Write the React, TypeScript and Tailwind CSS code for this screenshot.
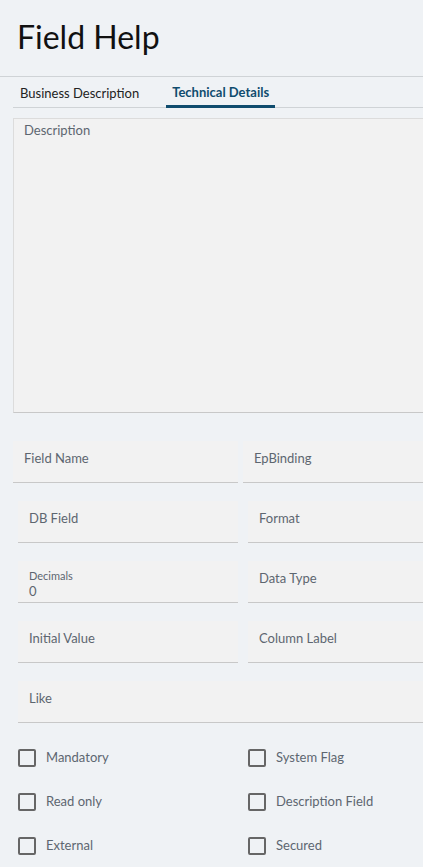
import React from 'react';

// Field Help panel - technical details tab
const font = { fontFamily: 'Lato, "Noto Sans", Arial, sans-serif' };

function Field({ label, value, small }: { label: string; value?: string; small?: boolean }) {
  return (
    <div className="h-[42px] bg-[#f2f2f2] border-b border-[#c8c8c8] pl-[11px] min-w-0">
      {small ? (
        <div className="pt-[8px]">
          <div className="text-[11px] leading-[14px] text-[#5d6670]">{label}</div>
          <div className="text-[13px] leading-[17px] text-[#5d6670]">{value}</div>
        </div>
      ) : (
        <div className="pt-[8px] text-[13px] leading-[18px] text-[#5d6670]">{label}</div>
      )}
    </div>
  );
}

function Check({ label }: { label: string }) {
  return (
    <label className="flex items-center h-[18px]">
      <span className="w-[18px] h-[18px] border-2 border-[#666] rounded-[2px] shrink-0" />
      <span className="ml-[10px] text-[13px] text-[#5d6670]">{label}</span>
    </label>
  );
}

export default function App() {
  return (
    <div className="min-h-screen bg-[#eff2f5] overflow-hidden" style={font}>
      <div className="h-[77px] border-b border-[#cfd3d6] pl-[17px] pt-[17px]">
        <h1 className="text-[32px] leading-[40px] text-[#111]">Field Help</h1>
      </div>

      <div className="ml-[13px] flex items-start h-[31px] border-b border-[#cfd3d6]">
        <button className="px-[7px] text-[13px] text-[#222] leading-[32px]">Business Description</button>
        <button className="ml-[20px] h-[31px] px-[6px] pt-[3px] text-[13px] font-bold text-[#0f4c6e] leading-[25px] border-b-[3px] border-[#0f4c6e]">
          Technical Details
        </button>
      </div>

      <div className="ml-[13px] mt-[10px] h-[295px] bg-[#f2f2f2] border-l border-t border-[#dcdcdc] border-b border-b-[#c8c8c8] px-[10px] pt-[2px]">
        <div className="text-[13px] leading-[18px] text-[#5d6670]">Description</div>
      </div>

      <div className="mt-[28px] flex flex-col gap-[18px]">
        <div className="ml-[13px] grid grid-cols-[225px_1fr] gap-[5px]">
          <Field label="Field Name" />
          <Field label="EpBinding" />
        </div>
        <div className="ml-[18px] grid grid-cols-[220px_1fr] gap-[10px]">
          <Field label="DB Field" />
          <Field label="Format" />
        </div>
        <div className="ml-[18px] grid grid-cols-[220px_1fr] gap-[10px]">
          <Field label="Decimals" value="0" small />
          <Field label="Data Type" />
        </div>
        <div className="ml-[18px] grid grid-cols-[220px_1fr] gap-[10px]">
          <Field label="Initial Value" />
          <Field label="Column Label" />
        </div>
        <div className="ml-[18px]">
          <Field label="Like" />
        </div>
      </div>

      <div className="ml-[18px] mt-[26px] grid grid-cols-[230px_1fr] gap-y-[26px]">
        <Check label="Mandatory" />
        <Check label="System Flag" />
        <Check label="Read only" />
        <Check label="Description Field" />
        <Check label="External" />
        <Check label="Secured" />
      </div>
    </div>
  );
}
